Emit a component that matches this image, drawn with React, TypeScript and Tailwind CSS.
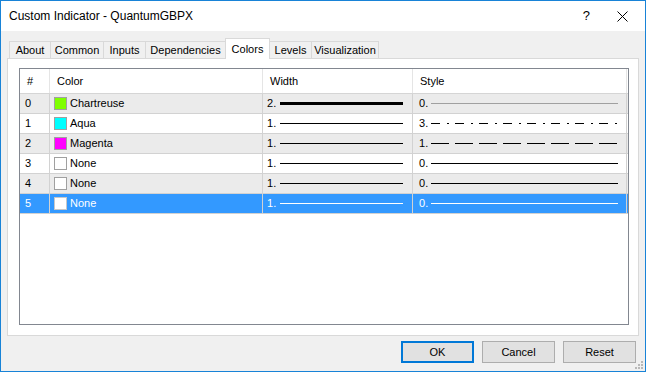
import React from "react";

type Row = {
    n: number;
    swatch: string;
    name: string;
    width: number;
    style: number;
    dash?: string;
    styleColor?: string;
};

const rows: Row[] = [
    { n: 0, swatch: "#7fff00", name: "Chartreuse", width: 2, style: 0, styleColor: "#a0a0a0" },
    { n: 1, swatch: "#00ffff", name: "Aqua", width: 1, style: 3, dash: "9 7 2 6" },
    { n: 2, swatch: "#ff00ff", name: "Magenta", width: 1, style: 1, dash: "18 6" },
    { n: 3, swatch: "#ffffff", name: "None", width: 1, style: 0 },
    { n: 4, swatch: "#ffffff", name: "None", width: 1, style: 0 },
    { n: 5, swatch: "#ffffff", name: "None", width: 1, style: 0 },
];

const tabs = [
    { label: "About", w: "w-[42px]" },
    { label: "Common", w: "w-[54px]" },
    { label: "Inputs", w: "w-[43px]" },
    { label: "Dependencies", w: "w-[81px]" },
    { label: "Colors", w: "w-[45px]", active: true },
    { label: "Levels", w: "w-[43px]" },
    { label: "Visualization", w: "w-[68px]" },
];

const SELECTED = 5;

function StyleLine({ dash, color }: { dash?: string; color: string }) {
    return (
        <svg className="flex-1 h-[3px] mr-[8px]" preserveAspectRatio="none">
            <line x1="0" y1="1.5" x2="100%" y2="1.5" stroke={color} strokeWidth="1" strokeDasharray={dash} />
        </svg>
    );
}

export default function App() {
    return (
        <div
            className="w-[646px] h-[372px] border border-[#1883d7] bg-[#f0f0f0] flex flex-col text-black overflow-hidden"
            style={{ fontFamily: '"Liberation Sans", Arial, sans-serif' }}
        >
            {/* title bar */}
            <div className="h-[30px] bg-white flex items-center pl-[8px] text-[12px] shrink-0">
                <span>Custom Indicator - QuantumGBPX</span>
                <span className="ml-auto mr-[27px] text-[13px]">?</span>
                <svg width="11" height="11" viewBox="0 0 11 11" className="mr-[17px]">
                    <path d="M0.5 0.5 L10.5 10.5 M10.5 0.5 L0.5 10.5" stroke="#000" strokeWidth="1" />
                </svg>
            </div>

            <div className="flex-1 flex flex-col pt-[7px] px-[6px] text-[11px]">
                {/* tabs */}
                <div className="flex items-end h-[20px] ml-[2px]">
                    {tabs.map((t, i) =>
                        t.active ? (
                            <div
                                key={t.label}
                                className={`${t.w} -ml-px h-[21px] -mb-px relative z-10 bg-white border border-b-0 border-[#d9d9d9] flex items-center justify-center`}
                            >
                                {t.label}
                            </div>
                        ) : (
                            <div
                                key={t.label}
                                className={`${t.w} ${i > 0 ? "-ml-px" : ""} h-[17px] bg-[#f0f0f0] border border-b-0 border-[#d9d9d9] flex items-center justify-center pt-px`}
                            >
                                {t.label}
                            </div>
                        )
                    )}
                </div>

                {/* tab panel */}
                <div className="h-[278px] bg-white border border-[#d9d9d9] pt-[9px] pl-[11px] pr-[9px] pb-[10px]">
                    <div className="h-full border border-[#828790] bg-white flex flex-col">
                        {/* header */}
                        <div className="flex h-[25px] border-b border-[#d5d5d5] shrink-0">
                            <div className="w-[30px] border-r border-[#e5e5e5] flex items-center pl-[7px]">#</div>
                            <div className="w-[213px] border-r border-[#e5e5e5] flex items-center pl-[7px]">Color</div>
                            <div className="w-[150px] border-r border-[#e5e5e5] flex items-center pl-[7px]">Width</div>
                            <div className="w-[214px] border-r border-[#e5e5e5] flex items-center pl-[7px]">Style</div>
                        </div>

                        {rows.map((r) => {
                            const sel = r.n === SELECTED;
                            const bg = sel ? "bg-[#3399ff] text-white" : r.n % 2 === 0 ? "bg-[#ebebeb]" : "bg-white";
                            const lineColor = sel ? "#ffffff" : "#000000";
                            return (
                                <div key={r.n} className={`flex h-[20px] border-b border-[#d2d2d2] ${bg}`}>
                                    <div className="w-[30px] border-r border-[#d2d2d2] flex items-center pl-[5px]">{r.n}</div>
                                    <div className="w-[213px] border-r border-[#d2d2d2] flex items-center pl-[4px]">
                                        <span
                                            className={`w-[13px] h-[13px] border ${sel ? "border-[#c8c8c8]" : "border-[#a0a0a0]"} mr-[3px]`}
                                            style={{ backgroundColor: r.swatch }}
                                        />
                                        {r.name}
                                    </div>
                                    <div className="w-[150px] border-r border-[#d2d2d2] flex items-center pl-[4px]">
                                        <span className="w-[13px]">{r.width}.</span>
                                        <div
                                            className={`flex-1 mr-[9px] ${r.width === 2 ? "h-[3px]" : "h-px"}`}
                                            style={{ backgroundColor: lineColor }}
                                        />
                                    </div>
                                    <div className="w-[214px] border-r border-[#d2d2d2] flex items-center pl-[6px]">
                                        <span className="w-[12px]">{r.style}.</span>
                                        <StyleLine dash={r.dash} color={sel ? "#ffffff" : r.styleColor ?? "#000000"} />
                                    </div>
                                </div>
                            );
                        })}
                    </div>
                </div>

                {/* buttons */}
                <div className="flex justify-end gap-[8px] mt-[5px] mr-[3px]">
                    <button className="w-[73px] h-[22px] bg-[#e1e1e1] border-2 border-[#0078d7]">OK</button>
                    <button className="w-[73px] h-[22px] bg-[#e1e1e1] border border-[#adadad]">Cancel</button>
                    <button className="w-[73px] h-[22px] bg-[#e1e1e1] border border-[#adadad]">Reset</button>
                </div>
            </div>

            {/* size grip */}
            <div className="relative h-0">
                <svg width="9" height="9" className="absolute right-[1px] bottom-[1px]">
                    <rect x="6" y="0" width="2" height="2" fill="#b8b8b8" />
                    <rect x="3" y="3" width="2" height="2" fill="#b8b8b8" />
                    <rect x="6" y="3" width="2" height="2" fill="#b8b8b8" />
                    <rect x="0" y="6" width="2" height="2" fill="#b8b8b8" />
                    <rect x="3" y="6" width="2" height="2" fill="#b8b8b8" />
                    <rect x="6" y="6" width="2" height="2" fill="#b8b8b8" />
                </svg>
            </div>
        </div>
    );
}
